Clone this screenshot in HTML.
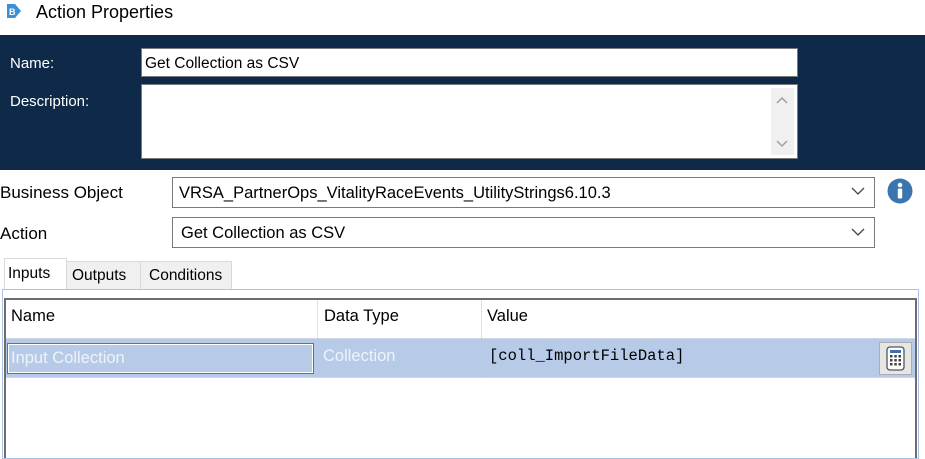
<!DOCTYPE html>
<html><head><style>
*{margin:0;padding:0;box-sizing:border-box}
body{width:925px;height:448px;background:#fff;font-family:"Liberation Sans",sans-serif;font-size:16px;color:#000;position:relative;overflow:hidden}
.a{position:absolute}
.inp{position:absolute;background:#fff;border:1px solid #7a7a7a;padding-left:3px;white-space:nowrap}
</style></head><body>
<svg class="a" style="left:5px;top:2px" width="18" height="18" viewBox="0 0 18 18"><path d="M2 2h8l6 7-6 7H2z" fill="#3b8fd4"/><text x="4" y="13" font-size="9" fill="#fff" font-family="Liberation Sans" font-weight="bold">B</text></svg>
<div class="a" style="left:36px;top:2px;font-size:18px">Action Properties</div>
<div class="a" style="left:0;top:35px;width:925px;height:135px;background:#0e2a48"></div>
<div class="a" style="left:10px;top:55px;color:#fff;font-size:15px">Name:</div>
<div class="a" style="left:10px;top:93px;color:#fff;font-size:15px">Description:</div>
<div class="inp" style="left:141px;top:48px;width:657px;height:29px;line-height:29px;font-size:15.5px">Get Collection as CSV</div>
<div class="inp" style="left:141px;top:84px;width:657px;height:75px"></div>
<div class="a" style="left:771px;top:88px;width:23px;height:67px;background:#f0f0f0"></div>
<svg class="a" style="left:774px;top:92px" width="16" height="62"><path d="M3 11l5-5 5 5M3 49l5 5 5-5" stroke="#a0a0a0" stroke-width="1.5" fill="none"/></svg>
<div class="a" style="left:0;top:183px;font-size:17px">Business Object</div>
<div class="a" style="left:0;top:224px;font-size:17px">Action</div>
<div class="inp" style="left:172px;top:177px;width:703px;height:31px;line-height:31px;padding-left:6px;font-size:16.5px">VRSA_PartnerOps_VitalityRaceEvents_UtilityStrings6.10.3</div>
<div class="inp" style="left:172px;top:217px;width:703px;height:31px;line-height:31px;padding-left:8px;font-size:16.5px">Get Collection as CSV</div>
<svg class="a" style="left:851px;top:186px" width="14" height="10"><path d="M1 2l6 6 6-6" stroke="#444" stroke-width="1.3" fill="none"/></svg>
<svg class="a" style="left:851px;top:227px" width="14" height="10"><path d="M1 2l6 6 6-6" stroke="#444" stroke-width="1.3" fill="none"/></svg>
<svg class="a" style="left:887px;top:178px" width="26" height="26"><circle cx="13" cy="13" r="12.5" fill="#3a75b0"/><circle cx="13" cy="7" r="2.3" fill="#fff"/><rect x="10.8" y="10.5" width="4.4" height="10" rx="1" fill="#fff"/></svg>
<div class="a" style="left:66px;top:261px;width:75px;height:29px;background:#f0f0f0;border:1px solid #d9d9d9"></div>
<div class="a" style="left:140px;top:261px;width:92px;height:29px;background:#f0f0f0;border:1px solid #d9d9d9"></div>
<div class="a" style="left:4px;top:258px;width:63px;height:32px;background:#fff;border:1px solid #d9d9d9;border-bottom:none"></div>
<div class="a" style="left:8px;top:265px;font-size:15.5px">Inputs</div>
<div class="a" style="left:72px;top:267px;font-size:15.5px">Outputs</div>
<div class="a" style="left:149px;top:267px;font-size:15.5px">Conditions</div>
<div class="a" style="left:2px;top:289px;width:917px;height:170px;border:1px solid #a9c2e6;background:#fff"></div>
<div class="a" style="left:4px;top:298px;width:913px;height:160px;border:2px solid #6d6d6d;border-bottom:none;background:#fff"></div>
<div class="a" style="left:317px;top:300px;width:1px;height:78px;background:#e0e0e0"></div>
<div class="a" style="left:481px;top:300px;width:1px;height:78px;background:#e0e0e0"></div>
<div class="a" style="left:11px;top:307px;font-size:16.5px">Name</div>
<div class="a" style="left:324px;top:307px;font-size:16.5px">Data Type</div>
<div class="a" style="left:487px;top:307px;font-size:16.5px">Value</div>
<div class="a" style="left:6px;top:338px;width:909px;height:40px;background:#b7cbe9;border-top:1px solid #cfd8e6;border-bottom:1px solid #cfd8e6"></div>
<div class="a" style="left:317px;top:338px;width:1px;height:40px;background:#c8c8c8"></div>
<div class="a" style="left:481px;top:338px;width:1px;height:40px;background:#c8c8c8"></div>
<div class="a" style="left:7px;top:343px;width:307px;height:31px;border:1px solid #707070;box-shadow:inset 0 0 0 1px #fff"></div>
<div class="a" style="left:11px;top:349px;font-size:16.5px;color:#eef3fa">Input Collection</div>
<div class="a" style="left:323px;top:347px;font-size:16.5px;color:#eef3fa">Collection</div>
<div class="a" style="left:489px;top:347px;font-family:'Liberation Mono',monospace;font-size:15.5px">[coll_ImportFileData]</div>
<div class="a" style="left:879px;top:342px;width:33px;height:33px;background:#e6e6e6;border:1px solid #adadad"></div>
<svg class="a" style="left:886px;top:346px" width="19" height="25"><rect x="1" y="1" width="17" height="23" rx="3" fill="#fff" stroke="#555" stroke-width="1.3"/><rect x="4" y="4" width="11" height="3" fill="#3a6fb0"/><g fill="#444"><rect x="4" y="9" width="2.5" height="2.5"/><rect x="8.3" y="9" width="2.5" height="2.5"/><rect x="12.5" y="9" width="2.5" height="2.5"/><rect x="4" y="13" width="2.5" height="2.5"/><rect x="8.3" y="13" width="2.5" height="2.5"/><rect x="12.5" y="13" width="2.5" height="2.5"/><rect x="4" y="17" width="2.5" height="2.5"/><rect x="8.3" y="17" width="2.5" height="2.5"/><rect x="12.5" y="17" width="2.5" height="2.5"/></g></svg>
</body></html>
